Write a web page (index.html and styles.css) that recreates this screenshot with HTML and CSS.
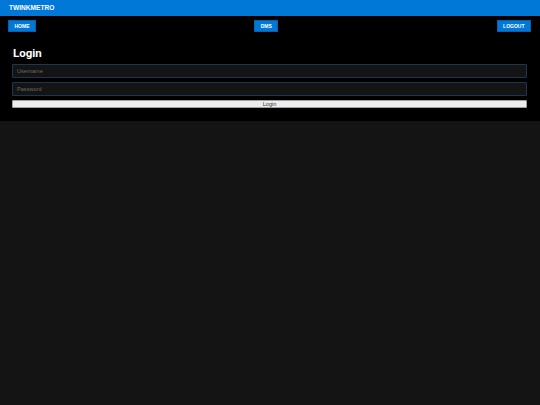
FILE: index.html
```html
<!DOCTYPE html>
<html lang="en">
<head>
<meta charset="utf-8">
<title>TwinkMetro</title>
<link rel="stylesheet" href="styles.css">
</head>
<body>
<header class="site-header">TWINKMETRO</header>
<section class="panel">
  <nav class="nav">
    <a class="nav-btn" href="#">HOME</a>
    <a class="nav-btn" href="#">DMS</a>
    <a class="nav-btn" href="#">LOGOUT</a>
  </nav>
  <main class="content">
    <h1 class="title">Login</h1>
    <form class="login-form">
      <input class="field" type="text" placeholder="Username">
      <input class="field" type="password" placeholder="Password">
      <button class="submit" type="button">Login</button>
    </form>
  </main>
</section>
</body>
</html>
```
FILE: styles.css
```css
html, body {
  margin: 0;
  padding: 0;
  background: #141414;
  font-family: "Liberation Sans", Arial, sans-serif;
}
.site-header {
  height: 16px;
  background: #0078d7;
  color: #fff;
  font-weight: bold;
  font-size: 6.6px;
  line-height: 16px;
  padding-left: 9px;
}
.panel {
  background: #000;
  padding-bottom: 13px;
}
.nav {
  display: flex;
  justify-content: space-between;
  align-items: center;
  padding: 3.5px 9px 0 8px;
}
.nav-btn {
  display: block;
  height: 12px;
  box-sizing: border-box;
  padding: 0 5.5px;
  background: #0078d7;
  border: 1px solid #0a5fa8;
  color: #fff;
  font-size: 5px;
  font-weight: bold;
  line-height: 10px;
  text-decoration: none;
}
.content {
  padding: 14.9px 13px 0 12px;
}
.title {
  margin: 0 0 3.6px 1px;
  font-family: Roboto, "Liberation Sans", sans-serif;
  font-size: 11.5px;
  line-height: 14px;
  color: #fff;
  font-weight: bold;
}
.login-form {
  display: flex;
  flex-direction: column;
  gap: 3.5px;
  margin: 0;
}
.field {
  display: block;
  height: 14.5px;
  box-sizing: border-box;
  margin: 0;
  padding: 0 4px;
  background: #141414;
  border: 1px solid #1b3650;
  border-radius: 1px;
  color: #ccc;
  font-family: "Liberation Sans", Arial, sans-serif;
  font-size: 5.6px;
  outline: none;
}
.field::placeholder {
  color: #6a6a6a;
}
.submit {
  display: block;
  height: 8.5px;
  box-sizing: border-box;
  margin: 0;
  padding: 0;
  background: #ececec;
  border: 1px solid #a0a0a0;
  border-radius: 1px;
  color: #333;
  font-family: "Liberation Sans", Arial, sans-serif;
  font-size: 5.5px;
  line-height: 6.5px;
}
```
